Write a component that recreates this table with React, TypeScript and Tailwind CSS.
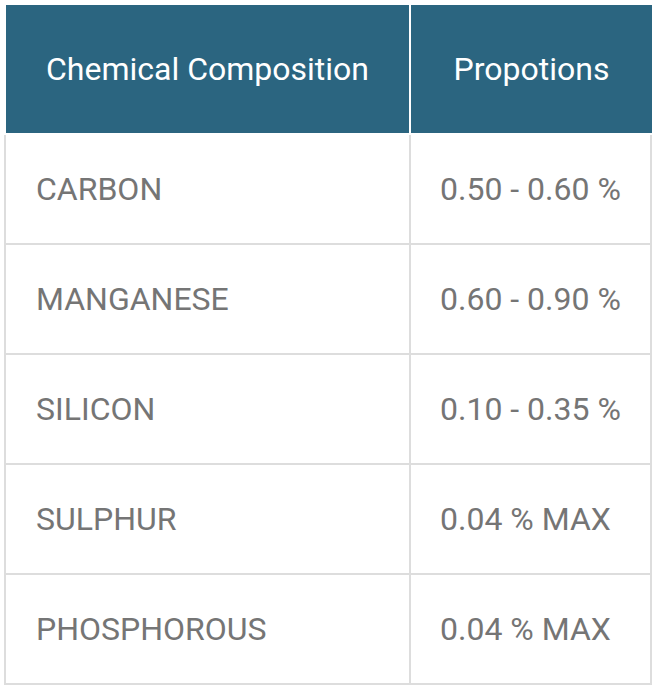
const rows = [
  { name: "CARBON", value: "0.50 - 0.60 %" },
  { name: "MANGANESE", value: "0.60 - 0.90 %" },
  { name: "SILICON", value: "0.10 - 0.35 %" },
  { name: "SULPHUR", value: "0.04 % MAX" },
  { name: "PHOSPHOROUS", value: "0.04 % MAX" },
];

export default function App() {
  return (
    <div className="min-h-screen bg-white pt-[5px] pl-[4px] font-['Roboto',sans-serif]">
      <div className="w-[648px]">
        {/* Header */}
        <div className="ml-[2px] flex h-[128px] bg-[#2b6580] text-[32px] text-white">
          <div className="flex w-[403px] items-center justify-center">Chemical Composition</div>
          <div className="w-[2px] bg-white" />
          <div className="flex flex-1 items-center justify-center">Propotions</div>
        </div>

        {/* Body */}
        <div className="mt-[2px] border-x-2 border-[#dddddd] text-[32px] text-[#757575]">
          {rows.map((row) => (
            <div key={row.name} className="flex h-[110px] border-b-2 border-[#dddddd]">
              <div className="flex w-[403px] items-center pl-[30px]">{row.name}</div>
              <div className="w-[2px] bg-[#dddddd]" />
              <div className="flex flex-1 items-center pl-[29px]">{row.value}</div>
            </div>
          ))}
        </div>
      </div>
    </div>
  );
}
